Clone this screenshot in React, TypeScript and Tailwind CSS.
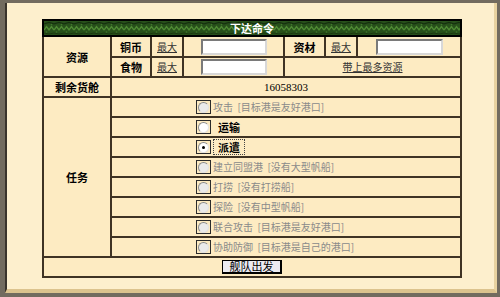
const FONT = "font-['Noto_Sans_CJK_SC','Noto_Sans',sans-serif]";

const TASKS = [
  { label: "攻击", note: "[目标港是友好港口]", disabled: true },
  { label: "运输", note: "", disabled: false },
  { label: "派遣", note: "", disabled: false, checked: true },
  { label: "建立同盟港", note: "[没有大型帆船]", disabled: true },
  { label: "打捞", note: "[没有打捞船]", disabled: true },
  { label: "探险", note: "[没有中型帆船]", disabled: true },
  { label: "联合攻击", note: "[目标港是友好港口]", disabled: true },
  { label: "协助防御", note: "[目标港是自己的港口]", disabled: true },
];

function Radio({ checked, disabled }: { checked?: boolean; disabled?: boolean }) {
  return (
    <span className="inline-flex h-[14px] w-[15px] shrink-0 items-center justify-center border border-[#2b2b2b]">
      <span
        className={`flex h-[11px] w-[11px] items-center justify-center rounded-full border border-t-[#8c8c8c] border-l-[#8c8c8c] border-r-[#e2e2e2] border-b-[#e2e2e2] ${
          disabled ? "bg-[#ebebeb]" : "bg-white"
        }`}
      >
        {checked && <span className="h-[3px] w-[3px] rounded-full bg-black" />}
      </span>
    </span>
  );
}

function Header() {
  return (
    <td colSpan={7} className="relative h-[16px] border-2 border-black p-0">
      <svg className="absolute inset-0 h-full w-full" preserveAspectRatio="none">
        <defs>
          <pattern id="vine" width="10" height="14" patternUnits="userSpaceOnUse">
            <rect width="10" height="14" fill="#27501a" />
            <path d="M0 9 L2.5 5.5 L5 9 L7.5 5.5 L10 9" fill="none" stroke="#4f8b33" strokeWidth="1.3" />
            <path d="M0 3 L5 1.5 L10 3" fill="none" stroke="#15300d" strokeWidth="1.2" />
            <path d="M0 12 L5 13 L10 12" fill="none" stroke="#1a3810" strokeWidth="1" />
            <circle cx="2.5" cy="11" r="0.8" fill="#3f7a2a" />
            <circle cx="7.5" cy="3.5" r="0.8" fill="#3f7a2a" />
          </pattern>
        </defs>
        <rect width="100%" height="100%" fill="url(#vine)" />
      </svg>
      <div className="relative text-center text-[11px] font-bold leading-[14px] text-white">下达命令</div>
    </td>
  );
}

const cell = "border-2 border-[#3f3324] p-0";
const field =
  "h-[16px] border-2 border-t-[#7a7a7a] border-l-[#7a7a7a] border-r-[#d8d8d8] border-b-[#d8d8d8] bg-white align-middle";

export default function App() {
  return (
    <div className={`h-[297px] w-[500px] bg-[#726b5f] pt-[3px] pl-[5px] pr-[3px] pb-[4px] ${FONT}`}>
      <div className="h-full border-l-2 border-l-[#3a342c] border-r-[3px] border-b-[4px] border-r-[#e8d2a0] border-b-[#dcc38e] bg-[#fdefcd] pl-[35px] pt-[16px]">
        <table className="w-[418px] table-fixed border-collapse border-2 border-black bg-[#fdebc2] text-[10px] leading-[14px] text-black">
          <colgroup>
            <col className="w-[68px]" />
            <col className="w-[40px]" />
            <col className="w-[32px]" />
            <col className="w-[101px]" />
            <col className="w-[41px]" />
            <col className="w-[32px]" />
            <col className="w-[104px]" />
          </colgroup>
          <tbody>
            <tr>
              <Header />
            </tr>
            <tr className="h-[21px]">
              <td rowSpan={2} className={`${cell} text-center text-[11px] font-bold`}>资源</td>
              <td className={`${cell} text-center text-[11px] font-bold`}>铜币</td>
              <td className={`${cell} text-center text-[#333] underline`}>最大</td>
              <td className={`${cell} text-center`}>
                <input className={`${field} w-[66px]`} />
              </td>
              <td className={`${cell} text-center text-[11px] font-bold`}>资材</td>
              <td className={`${cell} text-center text-[#333] underline`}>最大</td>
              <td className={`${cell} text-center`}>
                <input className={`${field} w-[67px]`} />
              </td>
            </tr>
            <tr className="h-[20px]">
              <td className={`${cell} text-center text-[11px] font-bold`}>食物</td>
              <td className={`${cell} text-center text-[#333] underline`}>最大</td>
              <td className={`${cell} text-center`}>
                <input className={`${field} w-[66px]`} />
              </td>
              <td colSpan={3} className={`${cell} text-center text-[#333] underline`}>带上最多资源</td>
            </tr>
            <tr className="h-[20px]">
              <td className={`${cell} text-center text-[11px] font-bold`}>剩余货舱</td>
              <td colSpan={6} className={`${cell} text-center font-['Liberation_Serif',serif] text-[11px]`}>16058303</td>
            </tr>
            {TASKS.map((t, i) => (
              <tr key={t.label} className="h-[20px]">
                {i === 0 && (
                  <td rowSpan={TASKS.length} className={`${cell} text-center text-[11px] font-bold`}>任务</td>
                )}
                <td colSpan={6} className={`${cell} pl-[84px]`}>
                  <div className="flex items-center">
                    <Radio checked={t.checked} disabled={t.disabled} />
                    {t.disabled ? (
                      <span className="ml-[2px] whitespace-pre text-[#8a8a8a]">
                        {t.label}  {t.note}
                      </span>
                    ) : (
                      <span
                        className={`ml-[2px] px-[4px] text-[11px] font-bold ${
                          t.checked ? "border border-dotted border-[#444]" : "border border-transparent"
                        }`}
                      >
                        {t.label}
                      </span>
                    )}
                  </div>
                </td>
              </tr>
            ))}
            <tr className="h-[20px]">
              <td colSpan={7} className={`${cell} text-center`}>
                <button className="h-[14px] w-[60px] border border-black border-r-2 border-b-2 bg-[#ecebf2] text-[11px] leading-[11px] text-black">
                  舰队出发
                </button>
              </td>
            </tr>
          </tbody>
        </table>
      </div>
    </div>
  );
}
